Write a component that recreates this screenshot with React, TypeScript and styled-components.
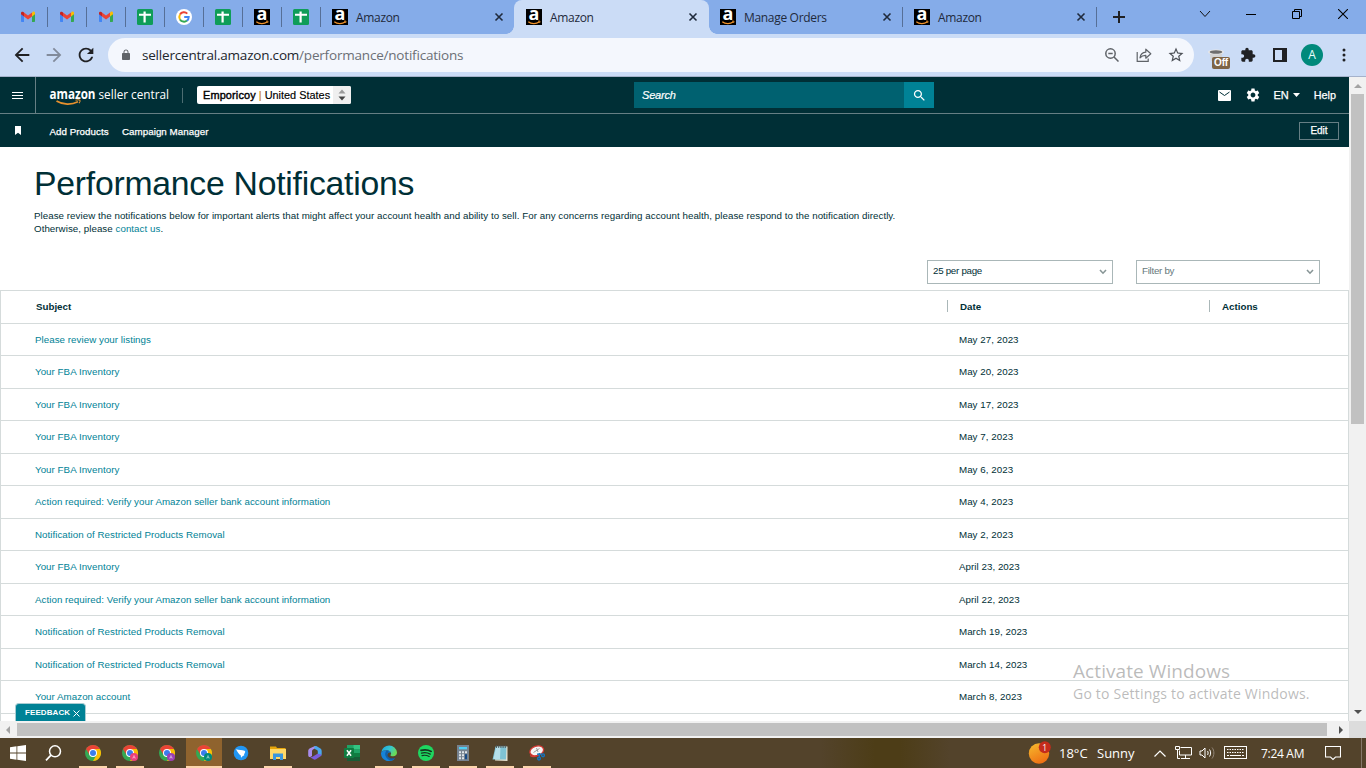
import React from "react";
import styled, { createGlobalStyle, css } from "styled-components";

const GlobalStyle = createGlobalStyle`
  * { box-sizing: border-box; }
  html, body { margin: 0; padding: 0; overflow: hidden; background: #fff; }
  svg { display: block; flex: none; }
`;

const ui = `"Open Sans", "Noto Sans", sans-serif`;
const arial = `"Liberation Sans", Arial, sans-serif`;

const Screen = styled.div`
  position: relative;
  width: 1366px;
  height: 768px;
  display: flex;
  flex-direction: column;
  overflow: hidden;
  font-family: ${arial};
`;

/* ---------- browser tabs ---------- */

const TabStrip = styled.div`
  height: 34px;
  display: flex;
  background: #85ace9;
  padding-left: 8px;
`;

const Tab = styled.div<{ $pinned?: boolean; $active?: boolean; $line?: boolean }>`
  position: relative;
  width: ${(p) => (p.$pinned ? 39 : 194)}px;
  height: 34px;
  display: flex;
  align-items: center;
  padding-left: 12px;
  font: 12px ${ui};
  color: #1f2a3c;
  ${(p) =>
    p.$active &&
    css`
      background: #cbdcf6;
      border-radius: 8px 8px 0 0;
      width: 195px;
      margin-right: -1px;
      &::before,
      &::after {
        content: "";
        position: absolute;
        bottom: 0;
        width: 8px;
        height: 8px;
      }
      &::before {
        left: -8px;
        background: radial-gradient(circle at 0 0, transparent 7.5px, #cbdcf6 8px);
      }
      &::after {
        right: -8px;
        background: radial-gradient(circle at 100% 0, transparent 7.5px, #cbdcf6 8px);
      }
    `}
  ${(p) =>
    p.$line &&
    css`
      &::after {
        content: "";
        position: absolute;
        right: -1px;
        top: 7px;
        width: 1px;
        height: 20px;
        background: #566f97;
      }
    `}
`;

const TabTitle = styled.span`
  margin-left: 8px;
  width: 130px;
  letter-spacing: -0.32px;
`;

const TabClose = styled.span`
  margin-left: 8px;
`;

const NewTab = styled.div`
  width: 46px;
  display: flex;
  align-items: center;
  justify-content: center;
`;

const WindowButtons = styled.div`
  margin-left: auto;
  height: 28px;
  display: flex;
`;

const WindowButton = styled.div`
  width: 46px;
  display: flex;
  align-items: center;
  justify-content: center;
`;

/* ---------- toolbar ---------- */

const Toolbar = styled.div`
  height: 43px;
  display: flex;
  align-items: center;
  background: #cbdcf6;
  border-bottom: 1px solid #a5b2cb;
  padding: 0 6px;
`;

const Slot = styled.div`
  width: 32px;
  height: 42px;
  display: flex;
  align-items: center;
  justify-content: center;
`;

const Omnibox = styled.div`
  width: 1086px;
  height: 34px;
  margin: 0 6px;
  border-radius: 17px;
  background: #f4f7fd;
  display: flex;
  align-items: center;
  padding: 0 2px 0 12px;
`;

const Url = styled.div`
  margin-left: 10px;
  flex: 1;
  font: 13.5px ${ui};
  letter-spacing: -0.2px;
  color: #6b6f76;
  b {
    font-weight: 400;
    color: #22262c;
  }
`;

const Avatar = styled.div`
  width: 22px;
  height: 22px;
  border-radius: 50%;
  background: #00897b;
  color: #e8fffb;
  font: 12px/22px ${ui};
  text-align: center;
`;

const ExtensionIcon = styled.div`
  position: relative;
  width: 16px;
  height: 16px;
`;

const OffBadge = styled.div`
  position: absolute;
  left: 4px;
  top: 10px;
  width: 18px;
  height: 12px;
  border-radius: 2px;
  background: #7d6446;
  color: #fff;
  font: 700 10px/12px ${arial};
  letter-spacing: -0.2px;
  text-align: center;
`;

/* ---------- site header ---------- */

const Viewport = styled.div`
  height: 644px;
  display: flex;
`;

const Page = styled.div`
  position: relative;
  width: 1349px;
  overflow: hidden;
  background: #fff;
  color: #002f36;
`;

const SiteBar = styled.div`
  height: 37px;
  display: flex;
  align-items: center;
  background: #002f36;
  border-bottom: 1px solid #667f84;
  color: #fff;
`;

const MenuButton = styled.div`
  width: 36px;
  height: 36px;
  margin-right: 13px;
  display: flex;
  align-items: center;
  justify-content: center;
  border-right: 1px solid #667f84;
`;

const LogoDivider = styled.div`
  width: 1px;
  height: 15px;
  margin: 0 14px 0 12px;
  background: #4d6d72;
`;

const StoreSelect = styled.div`
  width: 154px;
  height: 18px;
  display: flex;
  background: #fff;
  border-radius: 2px;
  color: #000;
  font: 10.9px/19px ${arial};
  padding-left: 6px;
  white-space: nowrap;
  overflow: hidden;
  -webkit-text-stroke: 0.15px #000;
  span {
    flex: 1;
  }
  b {
    font-weight: 400;
    letter-spacing: 0.15px;
    -webkit-text-stroke: 0.4px #000;
  }
  i {
    font-style: normal;
    color: #c98524;
    -webkit-text-stroke: 0.2px #c98524;
  }
`;

const StoreArrows = styled.div`
  width: 18px;
  background: #efefef;
  display: flex;
  align-items: center;
  justify-content: center;
`;

const SearchBox = styled.div`
  margin-left: 283px;
  width: 270px;
  height: 26px;
  background: #006170;
  padding-left: 8px;
  font: italic 11px/26px ${arial};
  -webkit-text-stroke: 0.2px #fff;
  letter-spacing: -0.2px;
`;

const SearchButton = styled.div`
  width: 30px;
  height: 26px;
  background: #008296;
  display: flex;
  align-items: center;
  justify-content: center;
`;

const HeaderTools = styled.div`
  margin-left: auto;
  display: flex;
  align-items: center;
  padding-right: 13px;
  font: 10.8px ${arial};
  -webkit-text-stroke: 0.25px #fff;
`;

const Language = styled.div`
  display: flex;
  align-items: center;
  gap: 4px;
  margin: 0 14px 0 13px;
  font-size: 11px;
`;

const FavouritesBar = styled.div`
  height: 33px;
  display: flex;
  align-items: center;
  background: #002f36;
  color: #fff;
  font: 9.75px ${arial};
  -webkit-text-stroke: 0.25px #fff;
  padding: 0 10px 0 14px;
`;

const Bookmark = styled.div`
  width: 35.5px;
  padding-bottom: 1px;
`;

const FavouriteLink = styled.span<{ $width: number }>`
  width: ${(p) => p.$width}px;
  padding-top: 2px;
  letter-spacing: 0.05px;
  white-space: nowrap;
`;

const EditButton = styled.div`
  margin-left: auto;
  width: 40px;
  height: 18px;
  border: 1px solid #667f84;
  font-size: 10px;
  line-height: 16px;
  text-align: center;
`;

/* ---------- notifications ---------- */

const Title = styled.h1`
  margin: 16px 0 0 34px;
  font: 400 33.75px/40px ${arial};
  letter-spacing: -0.25px;
`;

const Intro = styled.p`
  margin: 6px 0 0 34px;
  font-size: 9.75px;
  line-height: 13px;
  letter-spacing: 0.042px;
  white-space: nowrap;
`;

const Link = styled.span`
  color: #008296;
`;

const Filters = styled.div`
  display: flex;
  justify-content: flex-end;
  gap: 23px;
  margin: 25px 29px 6px 0;
`;

const Select = styled.div<{ $width: number; $muted?: boolean }>`
  width: ${(p) => p.$width}px;
  height: 24px;
  border: 1px solid #aab7b8;
  display: flex;
  align-items: center;
  justify-content: space-between;
  padding: 0 5px;
  font-size: 9.75px;
  line-height: 20px;
  letter-spacing: -0.28px;
  color: ${(p) => (p.$muted ? "#66797c" : "#002f36")};
  span {
    margin-top: -3px;
  }
`;

const Table = styled.div`
  border: 1px solid #d5dbdb;
  border-bottom: 0;
  height: 440px;
`;

const HeadRow = styled.div`
  display: flex;
  height: 33px;
  border-bottom: 1px solid #d5dbdb;
  padding: 9px 0 0 35px;
  font-weight: 700;
  font-size: 9.75px;
  line-height: 14px;
`;

const HeadCell = styled.div<{ $width?: number; $line?: boolean }>`
  width: ${(p) => (p.$width ? p.$width + "px" : "auto")};
  height: 12px;
  ${(p) => p.$line && "border-left: 1px solid #aab7b8; padding-left: 12px;"}
`;

const Row = styled.div`
  display: flex;
  height: 32px;
  border-bottom: 1px solid #d5dbdb;
  padding: 9px 0 0 34px;
  font-size: 9.75px;
  line-height: 14px;
  letter-spacing: 0.04px;
  white-space: nowrap;
  &:nth-child(odd) {
    height: 33px;
  }
`;

const Subject = styled.div`
  width: 924px;
  color: #008296;
`;

const Feedback = styled.div`
  position: absolute;
  left: 15px;
  bottom: 0;
  width: 71px;
  height: 18px;
  border: 1px solid #a9cdd3;
  border-bottom: 0;
  border-radius: 4px 4px 0 0;
  background: #008296;
  color: #fff;
  display: flex;
  align-items: center;
  justify-content: space-between;
  padding: 0 5px 0 9px;
  font: 700 8px/17px ${arial};
  letter-spacing: 0.1px;
  white-space: nowrap;
  svg {
    margin-top: 1px;
  }
`;

/* ---------- scroll bars ---------- */

const VScroll = styled.div`
  width: 17px;
  background: #f1f1f1;
  display: flex;
  flex-direction: column;
  align-items: center;
  padding: 7px 0 7px;
  justify-content: space-between;
`;

const VThumb = styled.div`
  width: 13px;
  height: 330px;
  margin: 6px 0 auto;
  background: #c1c1c1;
`;

const HScroll = styled.div`
  height: 17px;
  background: #f1f1f1;
  display: flex;
  align-items: center;
  padding-left: 6px;
`;

const HThumb = styled.div`
  width: 1310px;
  height: 13px;
  margin: 0 12px 0 7px;
  background: #c1c1c1;
`;

const ScrollCorner = styled.div`
  margin-left: auto;
  width: 17px;
  height: 17px;
  background: #dcdcdc;
`;

/* ---------- windows ---------- */

const Watermark = styled.div`
  position: absolute;
  left: 1073px;
  top: 658px;
  font-family: ${ui};
  color: rgba(120, 120, 120, 0.5);
  white-space: nowrap;
`;

const WatermarkTitle = styled.div`
  font-size: 19px;
  line-height: 26px;
  letter-spacing: 0.08px;
`;

const WatermarkText = styled.div`
  font-size: 14px;
  line-height: 20px;
  letter-spacing: 0.21px;
`;

const Taskbar = styled.div`
  height: 30px;
  display: flex;
  background: linear-gradient(90deg, #53432b 820px, #4d3d17 875px, #4d3d17 900px, #53432b 950px);
  color: #fff;
  font: 13px ${ui};
`;

const TaskItem = styled.div<{ $open?: boolean; $active?: boolean; $width?: number; $shift?: number }>`
  width: ${(p) => p.$width ?? 37}px;
  height: 30px;
  display: flex;
  align-items: center;
  justify-content: center;
  padding-right: ${(p) => p.$shift ?? 1}px;
  position: relative;
  ${(p) => p.$active && "background: linear-gradient(90deg, #8f632e 36px, transparent 36px);"}
  ${(p) =>
    (p.$open || p.$active) &&
    css`
      &::after {
        content: "";
        position: absolute;
        bottom: 0;
        left: ${p.$active ? 0 : 4}px;
        width: ${p.$active ? 36 : 28}px;
        height: 2px;
        background: #fcd5ac;
      }
    `}
`;

const Tray = styled.div`
  margin-left: auto;
  display: flex;
  align-items: center;
  height: 30px;
  white-space: nowrap;
`;

const TrayText = styled.span<{ $left: number; $width: number; $size?: number }>`
  margin-left: ${(p) => p.$left}px;
  width: ${(p) => p.$width}px;
  font-size: ${(p) => p.$size ?? 13}px;
  ${(p) => p.$size && "letter-spacing: -0.3px;"}
`;

const TrayIcon = styled.span<{ $left: number }>`
  margin-left: ${(p) => p.$left}px;
`;

const ShowDesktop = styled.div`
  margin-left: 20px;
  width: 5px;
  height: 30px;
  border-left: 1px solid #85786a;
`;

/* ---------- icons ---------- */

const Gmail = () => (
  <svg width="16" height="16" viewBox="0 0 16 16">
    <path d="M1 4v8.2c0 .5.3.8.8.8H4V7.2z" fill="#4285f4" />
    <path d="M12 7.2V13h2.200c.5 0 .8-.3.8-.8V4z" fill="#34a853" />
    <path d="M12 3.700V7.500l3-2.300V4c0-1.300-1.400-1.900-2.400-1.100z" fill="#fbbc04" />
    <path d="M4 7.500V3.500L8 6.500l4-3v4L8 10.500z" fill="#ea4335" />
    <path d="M1 4v1.300l3 2.200V3.500l-.6-.5C2.400 2.200 1 2.800 1 4z" fill="#c5221f" />
  </svg>
);

const Sheets = () => (
  <svg width="16" height="16" viewBox="0 0 16 16">
    <rect width="16" height="16" rx="1.500" fill="#0f9d58" />
    <path d="M6.500 2.500h2.200v2.300H14v2H8.700v6.700H6.500V6.800H2v-2h4.500z" fill="#fff" />
  </svg>
);

const Google = () => (
  <svg width="16" height="16" viewBox="0 0 16 16">
    <circle cx="8" cy="8" r="8" fill="#fff" />
    <g fill="none" strokeWidth="2">
      <path d="M11.300 4.600A4.700 4.700 0 0 0 4 5.600" stroke="#ea4335" />
      <path d="M4 5.500a4.800 4.800 0 0 0 0 5" stroke="#fbbc05" />
      <path d="M4 10.400a4.700 4.700 0 0 0 7 1.200" stroke="#34a853" />
      <path d="M8.200 8h4.500a4.600 4.600 0 0 1-1.800 3.700" stroke="#4285f4" />
    </g>
  </svg>
);

const AmazonIcon = () => (
  <svg width="16" height="16" viewBox="0 0 16 16" overflow="visible">
    <rect width="16" height="16" fill="#000" />
    <text x="8" y="11.300" fill="#fff" textAnchor="middle" fontFamily="Open Sans" fontWeight="700" fontSize="18">
      a
    </text>
    <path d="M2.300 12.800c3 2.400 8 2.400 10.800.2" stroke="#f0932b" strokeWidth="1.200" fill="none" />
    <path d="M12 12.200l2-.1-.4 1.900" stroke="#f0932b" strokeWidth=".9" fill="none" />
  </svg>
);

const CloseX = () => (
  <svg width="10" height="10" viewBox="0 0 10 10">
    <path d="M1.500 1.500l7 7M8.500 1.500l-7 7" stroke="#1f2a3c" strokeWidth="1.600" />
  </svg>
);

const Stroke = ({ w, h, d, color = "#202124", sw = 1, fill = "none" }: {
  w: number; h: number; d: string; color?: string; sw?: number; fill?: string;
}) => (
  <svg width={w} height={h} viewBox={`0 0 ${w} ${h}`}>
    <path d={d} stroke={color} strokeWidth={sw} fill={fill} />
  </svg>
);

const Solid = ({ size, box = 24, d, color }: { size: number; box?: number; d: string; color: string }) => (
  <svg width={size} height={size} viewBox={`0 0 ${box} ${box}`}>
    <path d={d} fill={color} />
  </svg>
);

const Chrome = ({ badge }: { badge?: string }) => (
  <svg width="16" height="16" viewBox="0 0 16 16" overflow="visible">
    <circle cx="8" cy="8" r="8" fill="#34a853" />
    <path d="M8 8L1.070 4A8 8 0 0 1 14.930 4z" fill="#ea4335" />
    <path d="M1.070 4L4.600 10 8 8V4z" fill="#ea4335" />
    <path d="M14.930 4A8 8 0 0 1 8 16l3.500-6L10 4z" fill="#fbbc04" />
    <circle cx="8" cy="8" r="4" fill="#fff" />
    <circle cx="8" cy="8" r="3" fill="#3b7ded" />
    {badge && (
      <>
        <circle cx="12" cy="12" r="4" fill={badge} />
        <path d="M10.600 13.500L12 10.500l1.400 3M11 12.700h2" stroke="#fff" strokeOpacity=".7" strokeWidth=".6" fill="none" />
      </>
    )}
  </svg>
);

const StartIcon = () => (
  <svg width="16" height="16" viewBox="0 0 16 16">
    <path d="M0 2.200L6.500 1.300v6.200H0zM7.300 1.200L16 0v7.500H7.300zM0 8.400h6.500v6.300L0 13.800zM7.300 8.400H16V16l-8.700-1.200z" fill="#fff" />
  </svg>
);

const BlueBird = () => (
  <svg width="16" height="16" viewBox="0 0 16 16">
    <circle cx="8" cy="8" r="7.300" fill="#2196f3" />
    <path d="M3 4.300c3 1 6 .6 8.500 1.500 1 .5.800 1.500.2 2.200L11 9.800l.3.800-1.300.2-2 2-.2-2.200C6 9.500 4.500 7 3 4.300z" fill="#fff" />
  </svg>
);

const Explorer = () => (
  <svg width="16" height="16" viewBox="0 0 16 16">
    <path d="M0 1.500h6l1 1.500h8.500v3H0z" fill="#e5a50a" />
    <rect y="4" width="16" height="10" fill="#ffd867" />
    <path d="M3 15V8.500h10V15h-3v-3H6v3z" fill="#3a96dd" />
  </svg>
);

const Office = () => (
  <svg width="16" height="16" viewBox="0 0 16 16">
    <path d="M8 1L3 3.300C1.800 4 1.200 5 1.200 6.300V10c0 1.500.8 2.300 2 2L5 11V6.300C5 5.500 5.300 5 6 4.600L9.500 2.500z" fill="#a98cec" />
    <path d="M7.500 1.200c.8-.4 1.500-.3 2.200.1L13.500 3.600c.8.500 1.200 1.300 1.200 2.400V9c0 1-.3 1.700-1 2.200L10.800 9.500V6.500c0-.7-.3-1.200-.9-1.500L7.500 3.700z" fill="#4aa8ee" />
    <path d="M14.500 9.500c-.1.900-.5 1.500-1.300 2L9 14.300c-.8.500-1.700.5-2.500 0L3 12.200c1 .2 1.800 0 2.500-.4l5-3z" fill="#7a5cdb" />
  </svg>
);

const Excel = () => (
  <svg width="16" height="16" viewBox="0 0 16 16">
    <rect x="3" width="13" height="16" fill="#21a366" />
    <rect x="9.500" width="6.500" height="4" fill="#33c481" />
    <rect x="3" y="8" width="6.500" height="4" fill="#107c41" />
    <rect x="3" y="12" width="13" height="4" fill="#185c37" />
    <rect x="9.500" y="8" width="6.500" height="4" fill="#107c41" />
    <rect y="3" width="10" height="10" rx=".8" fill="#107c41" />
    <path d="M2.900 5.300l4.200 5.500M7.100 5.300l-4.200 5.500" stroke="#fff" strokeWidth="1.500" />
  </svg>
);

const Edge = () => (
  <svg width="16" height="16" viewBox="0 0 16 16">
    <defs>
      <linearGradient id="edgeTop" x1="0" x2="1" y1="0" y2=".5">
        <stop offset="0" stopColor="#1ba1e2" />
        <stop offset=".55" stopColor="#35c6d0" />
        <stop offset="1" stopColor="#6bdc55" />
      </linearGradient>
    </defs>
    <path d="M.2 7A8 8 0 0 1 16 7.500c0 2.500-1.700 3.800-3.800 3.800-1.800 0-2.700-.5-2.700-1.100 0-.4.600-.7.600-1.900C10.100 6.500 8 5.200 5.600 5.200 3 5.200 1 6 .2 7z" fill="url(#edgeTop)" />
    <path d="M0 8c.5-2 3-3 5.600-2.800C8 5.400 9.800 6.400 10 8c-1-.8-3-.5-3.500 1.200-.7 2.500 2.500 5 6.500 4.300l1.200-.3A8 8 0 0 1 0 8z" fill="#1683d8" />
    <path d="M5.800 5.200C4 7 3.600 9.500 5 12c1 1.800 2.800 3.200 5 3.700 2-.5 3.500-1.700 4.500-3.200-3 1.400-7.500.5-8-2.800C6.300 8.500 7.200 7.500 8.500 7z" fill="#114a8b" opacity=".6" />
  </svg>
);

const Spotify = () => (
  <svg width="16" height="16" viewBox="0 0 16 16">
    <circle cx="8" cy="8" r="8" fill="#1ed760" />
    <g fill="none" stroke="#14351f" strokeLinecap="round">
      <path d="M3 5.400c3.500-.9 7-.7 10.200 1" strokeWidth="1.700" />
      <path d="M3.500 8.100c3-.8 6-.5 8.700 1" strokeWidth="1.400" />
      <path d="M4 10.600c2.500-.6 5-.3 7.200.9" strokeWidth="1.100" />
    </g>
  </svg>
);

const Calculator = () => (
  <svg width="16" height="16" viewBox="0 0 16 16">
    <rect x="2" width="12" height="16" fill="#76828f" />
    <rect x="4" y="2" width="8" height="2.300" fill="#50d0f5" />
    <g fill="#dfe5ea">
      <path d="M4 6.200h2v2H4zM7 6.200h2v2H7zM10 6.200h2v2h-2zM4 9.200h2v2H4zM7 9.200h2v2H7zM4 12.200h2v2H4zM7 12.200h2v2H7z" />
    </g>
    <rect x="10" y="9.200" width="2" height="5" fill="#174a86" />
  </svg>
);

const Notepad = () => (
  <svg width="16" height="16" viewBox="0 0 16 16">
    <path d="M4 1.500h11.500V16L3 15.500z" fill="#e6e2cf" />
    <path d="M3.500 1.500h11L14 14.500H.5z" fill="#7fc3d3" />
    <path d="M4 2h4.500L8 14H1.500z" fill="#b5e0ea" />
    <path d="M4.500 0v3M6.700 0v3M8.900 0v3M11.100 0v3M13.300 0v3" stroke="#484f52" strokeWidth=".9" />
  </svg>
);

const Snip = () => (
  <svg width="16" height="16" viewBox="0 0 16 16">
    <ellipse cx="7.800" cy="5.800" rx="7" ry="4.800" fill="#f5f5f5" stroke="#d63832" strokeWidth="1.300" transform="rotate(-18 8 6)" />
    <path d="M4.500 7.500l6-4M7.500 3l1.500 4" stroke="#888" strokeWidth=".8" />
    <path d="M1 10.500c3 2 5 1.500 7 0" stroke="#d63832" strokeWidth="1.200" fill="none" />
    <g fill="none" stroke="#1673bd" strokeWidth="1.400">
      <path d="M8 9.200h5" />
      <circle cx="14" cy="10.300" r="1.400" />
      <path d="M10.300 8v4" />
      <circle cx="10" cy="13.600" r="1.400" />
    </g>
  </svg>
);

const Weather = () => (
  <svg width="24" height="22" viewBox="0 0 24 22" overflow="visible">
    <defs>
      <linearGradient id="sun" x1=".2" x2=".7" y1="0" y2="1">
        <stop offset="0" stopColor="#f5b62c" />
        <stop offset="1" stopColor="#ef6c12" />
      </linearGradient>
    </defs>
    <circle cx="11" cy="11.500" r="10.200" fill="url(#sun)" />
    <circle cx="16.800" cy="5.300" r="6" fill="#c42b1c" />
    <text x="16.800" y="8.500" fontSize="8.500" fill="#fff" textAnchor="middle" fontFamily="Open Sans">
      1
    </text>
  </svg>
);

const NetworkIcon = () => (
  <svg width="17" height="16" viewBox="0 0 17 16">
    <path d="M5.500 2.500h11v7.500H4.500V5.500M10.500 10v3M6 13.500h9M.5 1.500h4v3h-4zM2.500 4.500v9H5" fill="none" stroke="#fff" />
  </svg>
);

const SpeakerIcon = () => (
  <svg width="17" height="14" viewBox="0 0 17 14">
    <path d="M1 5h2l3-3v10L3 9H1z" fill="none" stroke="#fff" />
    <path d="M8.500 5c.8 1 .8 3 0 4M10.500 3.500c1.500 2 1.500 5 0 7" fill="none" stroke="#fff" />
    <path d="M13 1.500c2.500 3 2.500 8 0 11" fill="none" stroke="#93877a" />
  </svg>
);

const KeyboardIcon = () => (
  <svg width="23" height="14" viewBox="0 0 23 14">
    <rect x=".5" y=".5" width="22" height="12" fill="none" stroke="#fff" />
    <path d="M3 3.500h17M3 6.500h17" stroke="#fff" strokeDasharray="1.500 1" />
    <path d="M3 9.500h2M6 9.500h11M18 9.500h2" stroke="#fff" />
  </svg>
);

const SellerLogo = () => (
  <svg width="121" height="24" viewBox="0 0 121 24" overflow="visible">
    <g fill="#fff" fontFamily="Open Sans">
      <text x="0.500" y="16" fontSize="13.500" fontWeight="700" textLength="46" lengthAdjust="spacingAndGlyphs">amazon</text>
      <text x="49.500" y="16" fontSize="13.500" fontWeight="400" textLength="70.500" lengthAdjust="spacingAndGlyphs">seller central</text>
    </g>
    <path d="M7.500 18c6.500 4 15 4 21.500 .8" fill="none" stroke="#e8912d" strokeWidth="1.700" />
    <path d="M26.500 17.200c2-.5 4-.4 4.500.1s-.1 1.700-.9 3" fill="none" stroke="#e8912d" strokeWidth="1.100" />
  </svg>
);

const GearPath =
  "M19.140 12.940c.04-.3.060-.61.060-.94 0-.32-.02-.64-.07-.94l2.030-1.580c.18-.14.23-.41.12-.61l-1.920-3.320c-.12-.22-.37-.29-.59-.22l-2.390.96c-.5-.38-1.030-.7-1.620-.94L14.400 2.810c-.04-.24-.24-.41-.48-.41h-3.840c-.24 0-.43.17-.47.41l-.36 2.540c-.59.24-1.130.57-1.620.94l-2.390-.96c-.22-.08-.47 0-.59.22L2.740 8.870c-.12.21-.08.47.12.61l2.030 1.580c-.05.3-.09.63-.09.94s.02.64.07.94l-2.030 1.580c-.18.14-.23.41-.12.61l1.920 3.320c.12.22.37.29.59.22l2.390-.96c.5.38 1.030.7 1.620.94l.36 2.540c.05.24.24.41.48.41h3.840c.24 0 .44-.17.47-.41l.36-2.540c.59-.24 1.130-.56 1.620-.94l2.390.96c.22.08.47 0 .59-.22l1.920-3.320c.12-.22.07-.47-.12-.61l-2.010-1.580zM12 15.600c-1.980 0-3.600-1.620-3.600-3.600s1.620-3.600 3.600-3.600 3.600 1.620 3.600 3.600-1.620 3.600-3.600 3.600z";
const PuzzlePath =
  "M20.500 11H19V7c0-1.100-.9-2-2-2h-4V3.500C13 2.120 11.880 1 10.500 1S8 2.120 8 3.500V5H4c-1.100 0-1.990.9-1.990 2v3.800H3.500c1.490 0 2.700 1.210 2.700 2.700s-1.210 2.700-2.700 2.700H2V20c0 1.100.9 2 2 2h3.800v-1.500c0-1.490 1.210-2.700 2.700-2.700 1.490 0 2.700 1.210 2.700 2.700V22H17c1.100 0 2-.9 2-2v-4h1.500c1.380 0 2.500-1.120 2.500-2.500S21.880 11 20.500 11z";
const StarPath =
  "M22 9.240l-7.190-.62L12 2 9.190 8.630 2 9.240l5.460 4.730L5.820 21 12 17.270 18.180 21l-1.630-7.030L22 9.240zM12 15.400l-3.760 2.270 1-4.280-3.320-2.880 4.380-.38L12 6.100l1.710 4.040 4.380.38-3.320 2.880 1 4.280L12 15.400z";
const LockPath =
  "M18 8h-1V6c0-2.760-2.240-5-5-5S7 3.240 7 6v2H6c-1.100 0-2 .9-2 2v10c0 1.100.9 2 2 2h12c1.100 0 2-.9 2-2V10c0-1.100-.9-2-2-2zM8.900 8V6c0-1.710 1.390-3.100 3.100-3.100 1.710 0 3.100 1.390 3.100 3.100v2H8.900z";
const SearchPath =
  "M15.500 14h-.79l-.28-.27C15.410 12.590 16 11.110 16 9.500 16 5.910 13.090 3 9.500 3S3 5.910 3 9.500 5.910 16 9.500 16c1.610 0 3.090-.59 4.230-1.570l.27.28v.79l5 4.990L20.490 19l-4.990-5zm-6 0C7.010 14 5 11.990 5 9.500S7.010 5 9.500 5 14 7.010 14 9.500 11.990 14 9.500 14z";
const ReloadPath =
  "M17.650 6.350C16.200 4.900 14.210 4 12 4c-4.420 0-7.990 3.580-7.990 8s3.570 8 7.990 8c3.730 0 6.840-2.550 7.730-6h-2.080c-.82 2.330-3.040 4-5.650 4-3.310 0-6-2.690-6-6s2.690-6 6-6c1.660 0 3.140.69 4.220 1.780L13 11h7V4l-2.350 2.350z";
const BackPath = "M20 11H7.830l5.590-5.590L12 4l-8 8 8 8 1.410-1.410L7.830 13H20v-2z";
const ForwardPath = "M12 4l-1.410 1.410L16.170 11H4v2h12.170l-5.580 5.590L12 20l8-8z";

/* ---------- data ---------- */

const pinnedTabs = [Gmail, Gmail, Gmail, Sheets, Google, Sheets, AmazonIcon, Sheets];

const openTabs = [
  { title: "Amazon", active: false, line: false },
  { title: "Amazon", active: true, line: false },
  { title: "Manage Orders", active: false, line: true },
  { title: "Amazon", active: false, line: true },
];

const notifications = [
  ["Please review your listings", "May 27, 2023"],
  ["Your FBA Inventory", "May 20, 2023"],
  ["Your FBA Inventory", "May 17, 2023"],
  ["Your FBA Inventory", "May 7, 2023"],
  ["Your FBA Inventory", "May 6, 2023"],
  ["Action required: Verify your Amazon seller bank account information", "May 4, 2023"],
  ["Notification of Restricted Products Removal", "May 2, 2023"],
  ["Your FBA Inventory", "April 23, 2023"],
  ["Action required: Verify your Amazon seller bank account information", "April 22, 2023"],
  ["Notification of Restricted Products Removal", "March 19, 2023"],
  ["Notification of Restricted Products Removal", "March 14, 2023"],
  ["Your Amazon account", "March 8, 2023"],
];

const BrowserChrome = () => (
  <>
    <TabStrip>
      {pinnedTabs.map((Icon, i) => (
        <Tab key={i} $pinned $line>
          <Icon />
        </Tab>
      ))}
      {openTabs.map((t, i) => (
        <Tab key={i} $active={t.active} $line={t.line}>
          <AmazonIcon />
          <TabTitle>{t.title}</TabTitle>
          <TabClose>
            <CloseX />
          </TabClose>
        </Tab>
      ))}
      <NewTab>
        <Stroke w={12} h={12} d="M6 0v12M0 6h12" sw={2} />
      </NewTab>
      <WindowButtons>
        <WindowButton>
          <Stroke w={12} h={8} d="M1 1l5 5.500L11 1" color="#111" />
        </WindowButton>
        <WindowButton>
          <Stroke w={10} h={2} d="M0 1.500h10" color="#000" />
        </WindowButton>
        <WindowButton>
          <Stroke w={10} h={10} d="M.5 2.500h7v7h-7zM2.500 2V.5h7v7H8" color="#000" />
        </WindowButton>
        <WindowButton>
          <Stroke w={10} h={10} d="M0 0l10 10M10 0L0 10" color="#000" sw={1.1} />
        </WindowButton>
      </WindowButtons>
    </TabStrip>
    <Toolbar>
      <Slot><Solid size={22} d={BackPath} color="#202124" /></Slot>
      <Slot><Solid size={22} d={ForwardPath} color="#828b9b" /></Slot>
      <Slot><Solid size={22} d={ReloadPath} color="#202124" /></Slot>
      <Omnibox>
        <Solid size={12} d={LockPath} color="#5f6368" />
        <Url>
          <b>sellercentral.amazon.com</b>/performance/notifications
        </Url>
        <Slot>
          <svg width="14" height="14" viewBox="0 0 14 14" fill="none" stroke="#5f6368" strokeWidth="1.500">
            <circle cx="5.500" cy="5.500" r="4.700" />
            <path d="M9 9l4.500 4.500M3.300 5.500h4.400" />
          </svg>
        </Slot>
        <Slot>
          <svg width="16" height="14" viewBox="0 0 16 14" fill="none" stroke="#5f6368" strokeWidth="1.200">
            <path d="M1.200 4v9.300h11V10.500" />
            <path d="M4 9.800C4.500 6.500 6.500 4.500 9.800 4.200V1.200l5 4.600-5 4.400V7.300C7.300 7.200 5.500 8 4 9.800z" strokeLinejoin="round" />
          </svg>
        </Slot>
        <Slot><Solid size={18} d={StarPath} color="#4d5157" /></Slot>
      </Omnibox>
      <Slot>
        <ExtensionIcon>
          <svg width="16" height="16" viewBox="0 0 16 16">
            <path d="M1.500 5l1.500 9h10l1.500-9z" fill="#d3d3d3" />
            <ellipse cx="8" cy="5" rx="8" ry="2.500" fill="#e8e8e8" />
            <ellipse cx="8" cy="5" rx="6.300" ry="1.700" fill="#6e6e6e" />
          </svg>
          <OffBadge>Off</OffBadge>
        </ExtensionIcon>
      </Slot>
      <Slot><Solid size={16} d={PuzzlePath} color="#202124" /></Slot>
      <Slot>
        <svg width="14" height="14" viewBox="0 0 14 14">
          <rect x="1" y="1" width="12" height="12" fill="none" stroke="#202124" strokeWidth="2" />
          <rect x="9" y="1" width="4" height="12" fill="#202124" />
        </svg>
      </Slot>
      <Slot><Avatar>A</Avatar></Slot>
      <Slot>
        <svg width="4" height="14" viewBox="0 0 4 14" fill="#202124">
          <circle cx="2" cy="2" r="1.500" />
          <circle cx="2" cy="7" r="1.500" />
          <circle cx="2" cy="12" r="1.500" />
        </svg>
      </Slot>
    </Toolbar>
  </>
);

const Header = () => (
  <>
    <SiteBar>
      <MenuButton>
        <Stroke w={11} h={10} d="M0 2.500h11M0 5.500h11M0 8.500h11" color="#fff" sw={1.1} />
      </MenuButton>
      <SellerLogo />
      <LogoDivider />
      <StoreSelect>
        <span>
          <b>Emporicoy</b> <i>|</i> United States
        </span>
        <StoreArrows>
          <svg width="8" height="12" viewBox="0 0 8 12">
            <path d="M4 0.500l3.500 4h-7z" fill="#9a9a9a" />
            <path d="M4 11.500l3.500-4h-7z" fill="#444" />
          </svg>
        </StoreArrows>
      </StoreSelect>
      <SearchBox>Search</SearchBox>
      <SearchButton>
        <Solid size={15} d={SearchPath} color="#fff" />
      </SearchButton>
      <HeaderTools>
        <svg width="13" height="11" viewBox="0 0 13 11">
          <rect width="13" height="11" rx="1" fill="#fff" />
          <path d="M1.500 2l5 3.500 5-3.500" stroke="#002f36" fill="none" />
        </svg>
        <TrayIcon $left={14}>
          <Solid size={16} d={GearPath} color="#fff" />
        </TrayIcon>
        <Language>
          EN
          <svg width="7" height="4" viewBox="0 0 7 4">
            <path d="M0 0h7L3.500 4z" fill="#fff" />
          </svg>
        </Language>
        Help
      </HeaderTools>
    </SiteBar>
    <FavouritesBar>
      <Bookmark>
        <svg width="8" height="9" viewBox="0 0 8 9">
          <path d="M1 0h6v9L4 6.800 1 9z" fill="#fff" />
        </svg>
      </Bookmark>
      <FavouriteLink $width={72.5}>Add Products</FavouriteLink>
      <FavouriteLink $width={100}>Campaign Manager</FavouriteLink>
      <EditButton>Edit</EditButton>
    </FavouritesBar>
  </>
);

const SelectChevron = () => <Stroke w={8} h={6} d="M1 1l3 3.200L7 1" color="#879596" sw={1.6} />;

export default function App() {
  return (
    <Screen>
      <GlobalStyle />
      <BrowserChrome />
      <Viewport>
        <Page>
          <Header />
          <Title>Performance Notifications</Title>
          <Intro>
            Please review the notifications below for important alerts that might affect your account health and ability
            to sell. For any concerns regarding account health, please respond to the notification directly.
            <br />
            Otherwise, please <Link>contact us</Link>.
          </Intro>
          <Filters>
            <Select $width={186}>
              <span>25 per page</span>
              <SelectChevron />
            </Select>
            <Select $width={184} $muted>
              <span>Filter by</span>
              <SelectChevron />
            </Select>
          </Filters>
          <Table>
            <HeadRow>
              <HeadCell $width={911}>Subject</HeadCell>
              <HeadCell $width={262} $line>Date</HeadCell>
              <HeadCell $line>Actions</HeadCell>
            </HeadRow>
            {notifications.map(([subject, date], i) => (
              <Row key={i}>
                <Subject>{subject}</Subject>
                <div>{date}</div>
              </Row>
            ))}
          </Table>
          <Feedback>
            FEEDBACK
            <Stroke w={7} h={7} d="M.5.5l6 6M6.500.5l-6 6" color="#fff" />
          </Feedback>
        </Page>
        <VScroll>
          <Stroke w={8} h={4} d="M0 4l4-4 4 4z" color="none" fill="#a3a3a3" />
          <VThumb />
          <Stroke w={8} h={4} d="M0 0l4 4 4-4z" color="none" fill="#505050" />
        </VScroll>
      </Viewport>
      <HScroll>
        <Stroke w={4} h={8} d="M4 0L0 4l4 4z" color="none" fill="#a3a3a3" />
        <HThumb />
        <Stroke w={4} h={8} d="M0 0l4 4-4 4z" color="none" fill="#505050" />
        <ScrollCorner />
      </HScroll>
      <Taskbar>
        <TaskItem $width={37}><StartIcon /></TaskItem>
        <TaskItem $width={38} $shift={5}>
          <svg width="17" height="16" viewBox="0 0 17 16" fill="none" stroke="#fff">
            <circle cx="10" cy="6.300" r="5.500" strokeWidth="1.500" />
            <path d="M6 10.200L1 15.300" strokeWidth="1.700" />
          </svg>
        </TaskItem>
        <TaskItem $open><Chrome /></TaskItem>
        <TaskItem $open><Chrome badge="#ec3f7c" /></TaskItem>
        <TaskItem><Chrome badge="#9c3fb5" /></TaskItem>
        <TaskItem $active><Chrome badge="#00897b" /></TaskItem>
        <TaskItem><BlueBird /></TaskItem>
        <TaskItem $open><Explorer /></TaskItem>
        <TaskItem><Office /></TaskItem>
        <TaskItem><Excel /></TaskItem>
        <TaskItem $open><Edge /></TaskItem>
        <TaskItem $open><Spotify /></TaskItem>
        <TaskItem $open><Calculator /></TaskItem>
        <TaskItem $open><Notepad /></TaskItem>
        <TaskItem $open><Snip /></TaskItem>
        <Tray>
          <Weather />
          <TrayText $left={7} $width={38}>18°C</TrayText>
          <TrayText $left={0} $width={57}>Sunny</TrayText>
          <Stroke w={12} h={7} d="M.5 6.500L6 1l5.500 5.500" color="#fff" sw={1.2} />
          <TrayIcon $left={9}><NetworkIcon /></TrayIcon>
          <TrayIcon $left={7}><SpeakerIcon /></TrayIcon>
          <TrayIcon $left={8}><KeyboardIcon /></TrayIcon>
          <TrayText $left={14} $width={64} $size={12}>7:24 AM</TrayText>
          <Stroke w={16} h={16} d="M.5 1.500h15v10.500h-5L8 14.500 5.500 12h-5z" color="#fff" sw={1.1} />
          <ShowDesktop />
        </Tray>
      </Taskbar>
      <Watermark>
        <WatermarkTitle>Activate Windows</WatermarkTitle>
        <WatermarkText>Go to Settings to activate Windows.</WatermarkText>
      </Watermark>
    </Screen>
  );
}
